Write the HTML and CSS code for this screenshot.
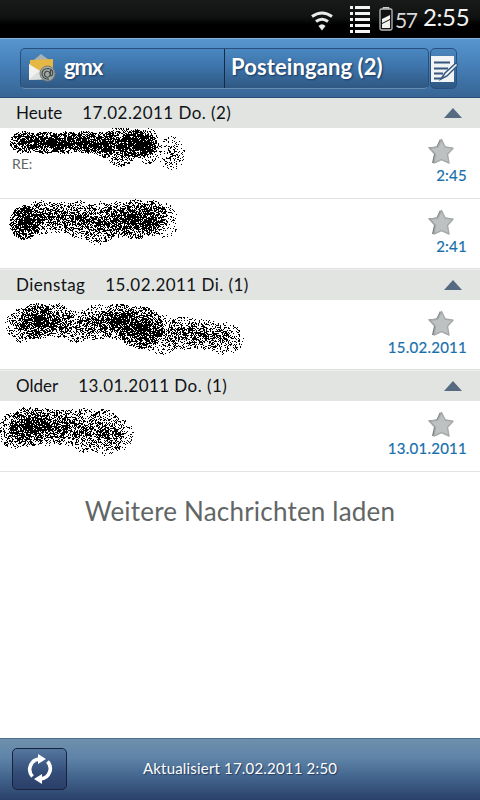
FILE: index.html
```html
<!DOCTYPE html>
<html lang="de">
<head>
<meta charset="utf-8">
<title>Posteingang</title>
<link rel="stylesheet" href="styles.css">
</head>
<body>
<svg width="0" height="0" class="defs" aria-hidden="true">
  <defs>
    <symbol id="star" viewBox="0 0 28 28">
      <path d="M13 2L9.500 9.500L1 10.500L7 17L5 26L7 26L14 22L22 26L20 17L26 11L17.500 9.500Z" fill="#777c7f"/>
      <path d="M14.500 2.500L18.200 10L26 11.200L20.500 17.300L22 26L14.500 22.600L7 26L8.500 17.300L3 11.200L10.800 10Z" fill="#bdc1c1" stroke="#a5a9a9" stroke-width="1.400" stroke-linejoin="round"/>
    </symbol>
  </defs>
</svg>
<div class="phone">
  <div class="status">
    <svg class="wifi" width="22" height="22" viewBox="0 0 22 22"><g fill="none" stroke="#e8ecec" stroke-width="3"><path d="M1 6.500Q11 -0.500 21 6.500"/><path d="M5 11.500Q11 7 17 11.500"/></g><path d="M7.500 16Q11 12.500 14.500 16L11 20.500Z" fill="#e8ecec"/></svg>
    <svg class="menu" width="20" height="28" viewBox="0 0 20 28"><path d="M0 2.500H3M5 2.500H20M0 8.500H3M5 8.500H20M0 14.500H3M5 14.500H20M0 20.500H3M5 20.500H20M0 26.500H3M5 26.500H20" stroke="#f4f4f4" stroke-width="2.800"/></svg>
    <svg class="battery" width="14" height="24" viewBox="0 0 14 24"><path d="M4.500 2V.8H9.500V2" fill="none" stroke="#ccc" stroke-width="1.500"/><rect x="1" y="2" width="12" height="21" rx="1.500" fill="#111" stroke="#bbb" stroke-width="1.300"/><path d="M3 12L11 8V12L3 16ZM3 17L11 13V21H3Z" fill="#f2f2ee"/></svg>
    <span class="percent">57</span>
    <span class="clock">2:55</span>
  </div>
  <header class="header">
    <div class="tabs">
      <div class="tab account">
        <svg width="28" height="28" viewBox="0 0 28 28"><path d="M1 10L13 0L25 9V25L1 26Z" fill="#a9b2b2"/><path d="M2 6L25 5V14L13 19L2 12Z" fill="#e5b846"/><path d="M1 10L12 17L1 26Z" fill="#f1f2ee"/><path d="M1 26L12 16L25 25Z" fill="#dcdfdb"/><circle cx="19.500" cy="19.500" r="7.500" fill="#a4aaa5" stroke="#747b77"/><path d="M22.500 16V21Q23 23 24.500 21Q26 15 20 14.500Q14 14.500 14 20Q15 25.500 21 25M22 19.500A2.800 3 0 1 1 16.500 20A2.800 3 0 0 1 22 19.500" fill="none" stroke="#3f4948" stroke-width="1.200"/></svg>
        <span class="account-name">gmx</span>
      </div>
      <div class="tab folder"><span class="folder-name">Posteingang (2)</span></div>
    </div>
    <div class="compose">
      <svg width="27" height="27" viewBox="0 0 27 27"><path d="M0 0H23V26H0Z" fill="#f2f3f4"/><path d="M3 6.500H19M3 12.500H17M3 17.500H12M3 22.500H10" stroke="#34577f" stroke-width="1.800"/><path d="M10 23L14 17L25 7L27 9L16 20Z" fill="#f5f7f8" stroke="#34577f" stroke-width="1.500"/></svg>
    </div>
  </header>
  <main class="list">
    <section>
      <div class="group first"><span class="day">Heute</span><span class="date">17.02.2011 Do. (2)</span><i class="arrow"></i></div>
      <div class="row"><canvas class="spray" width="260" height="70" data-spray="0"></canvas><span class="subject">RE:</span><div class="meta"><svg class="star"><use href="#star"/></svg><span class="time">2:45</span></div></div>
      <div class="row last"><canvas class="spray" width="260" height="70" data-spray="1"></canvas><div class="meta"><svg class="star"><use href="#star"/></svg><span class="time">2:41</span></div></div>
    </section>
    <section>
      <div class="group"><span class="day wide">Dienstag</span><span class="date">15.02.2011 Di. (1)</span><i class="arrow"></i></div>
      <div class="row last"><canvas class="spray" width="260" height="70" data-spray="2"></canvas><div class="meta"><svg class="star"><use href="#star"/></svg><span class="time">15.02.2011</span></div></div>
    </section>
    <section>
      <div class="group"><span class="day">Older</span><span class="date">13.01.2011 Do. (1)</span><i class="arrow"></i></div>
      <div class="row"><canvas class="spray" width="260" height="70" data-spray="3"></canvas><div class="meta"><svg class="star"><use href="#star"/></svg><span class="time">13.01.2011</span></div></div>
    </section>
    <div class="more"><span>Weitere Nachrichten laden</span></div>
  </main>
  <footer class="footer">
    <div class="refresh"><svg width="28" height="30" viewBox="0 0 28 30"><g fill="none" stroke="#fff" stroke-width="3.600"><path d="M6.500 22.500A10.500 10.500 0 0 1 13 5"/><path d="M21.500 7.500A10.500 10.500 0 0 1 15 25"/></g><path d="M12 0L20 5L12 10ZM16 20L8 25L16 30Z" fill="#fff"/></svg></div>
    <span class="updated">Aktualisiert 17.02.2011 2:50</span>
  </footer>
</div>
<script src="spray.js"></script>
</body>
</html>
```
FILE: styles.css
```css
* { box-sizing: border-box; }
body { margin: 0; background: #fff; font-family: Lato, "Open Sans", sans-serif; }
.defs { position: absolute; }
.phone { width: 480px; height: 800px; display: flex; flex-direction: column; overflow: hidden; }
.status { height: 38px; flex: none; display: flex; align-items: center; padding-left: 311px; color: #f3f3f3; background: linear-gradient(#191b1b, #101111 45%, #000 65%); white-space: nowrap; }
.wifi { margin-top: 4px; }
.menu { margin-left: 17px; }
.battery { margin-left: 9px; }
.percent { margin-left: 2px; width: 21px; font-size: 21px; letter-spacing: -1.5px; font-weight: 400; color: #d8d8d8; }
.clock { margin-left: 7px; margin-top: -5px; font-size: 24px; letter-spacing: -.4px; }
.header { height: 60px; flex: none; display: flex; align-items: flex-start; padding: 9px 0 0 20px; gap: 1px; border-top: 1px solid #86b1d9; border-bottom: 1px solid #294b7a; background: linear-gradient(#5795d0, #4680b8 45%, #376594); }
.tabs { width: 409px; height: 41px; display: flex; border: 1px solid #294f7e; border-bottom-color: #688bb0; border-radius: 5px; overflow: hidden; background: linear-gradient(#4a87c0, #3d74aa 45%, #2f5883); }
.tab { display: flex; height: 39px; color: #fff; font-weight: 700; text-shadow: 1px 1px 2px #17365e; white-space: nowrap; }
.account { width: 204px; padding: 5px 0 0 7px; border-right: 1px solid #142b46; }
.account-name { margin: -1px 0 0 8px; font-size: 22px; line-height: 27px; letter-spacing: -1.2px; }
.folder { flex: 1; padding-left: 6px; }
.folder-name { font-size: 22px; line-height: 35px; letter-spacing: .1px; }
.compose { width: 27px; height: 41px; padding-top: 7px; border: 1px solid #294f7e; border-radius: 5px; background: linear-gradient(#4a87c0, #2f5883); }
.compose svg { display: block; }
.list { flex: 1; background: #fff; }
.group { height: 31px; display: flex; align-items: center; padding: 0 18px 0 16px; background: #e1e4e0; border-top: 1px solid #edefed; font-size: 17px; color: #101216; white-space: nowrap; }
.group.first { height: 30px; border-top: 0; }
.group span { margin-top: -1px; }
.day { margin-right: 20px; }
.wide { letter-spacing: .4px; }
.date { letter-spacing: .45px; }
.arrow { margin-left: auto; border: 9px solid transparent; border-top: 0; border-bottom: 10px solid #566b82; }
.row { position: relative; height: 71px; padding: 28px 13px 0 12px; border-bottom: 1px solid #e2e2e2; display: flex; justify-content: space-between; }
.row.last { height: 70px; }
.spray { position: absolute; left: 0; top: 0; }
.subject { font-size: 14px; line-height: 16px; color: #606563; }
.meta { margin: -19px 0 0 auto; display: flex; flex-direction: column; align-items: flex-end; }
.star { width: 28px; height: 28px; margin-right: 12px; }
.time { font-size: 15px; line-height: 20px; letter-spacing: .25px; color: #176fac; -webkit-text-stroke: .2px #176fac; }
.more { height: 78px; display: flex; align-items: center; justify-content: center; font-size: 26px; letter-spacing: .2px; color: #616665; white-space: nowrap; }
.footer { height: 62px; flex: none; display: flex; align-items: center; padding-left: 12px; border-top: 1px solid #4e6e91; background: linear-gradient(#6e90ac, #5f84a8 30%, #456890 60%, #29406a); }
.refresh { width: 55px; height: 42px; margin-top: -1px; display: flex; align-items: center; justify-content: center; border: 1px solid #17233b; border-radius: 5px; background: linear-gradient(#5477a0, #334c78 60%, #2b3f68); }
.updated { margin: -4px 0 0 76px; font-size: 15px; letter-spacing: .18px; color: #fff; text-shadow: 1px 1px 1px #243b60; white-space: nowrap; }
```
FILE: spray.js
```js
// Each stroke: [x, y, radiusX, radiusY, dots]
const strokes = [
  [[24,14,15,11,480],[45,14,18,11,700],[65,14,18,11,650],[85,14,18,11,650],[105,16,16,13,500],[120,18,18,20,650],[138,15,18,14,1100],[148,18,12,18,250],[171,25,13,17,170]],
  [[24,23,15,17,1100],[42,18,18,17,500],[62,18,18,16,430],[80,20,18,19,500],[98,24,18,22,500],[116,20,18,18,650],[135,20,18,20,900],[152,19,15,18,600],[163,21,15,18,150]],
  [[22,25,17,17,350],[37,21,18,18,1000],[56,20,18,17,500],[76,26,18,16,300],[96,22,19,18,500],[118,21,20,18,850],[140,27,23,21,1400],[160,34,20,20,450],[185,33,20,17,450],[204,34,20,15,350],[224,38,19,16,330]],
  [[14,29,16,18,450],[29,25,20,20,1100],[48,25,19,19,550],[66,26,20,19,500],[85,29,20,22,500],[104,31,18,23,500],[118,33,15,16,230]]
];
let seed = 71;
function random() {
  seed = (seed * 1664525 + 1013904223) >>> 0;
  return seed / 4294967296;
}
document.querySelectorAll(".spray").forEach(canvas => {
  const context = canvas.getContext("2d");
  for (const [x, y, rx, ry, dots] of strokes[canvas.dataset.spray]) {
    for (let i = 0; i < dots; i++) {
      const angle = random() * Math.PI * 2;
      const radius = Math.pow(random(), .75);
      context.fillRect(Math.round(x + Math.cos(angle) * rx * radius), Math.round(y + Math.sin(angle) * ry * radius), 1, 1);
    }
  }
});
```
